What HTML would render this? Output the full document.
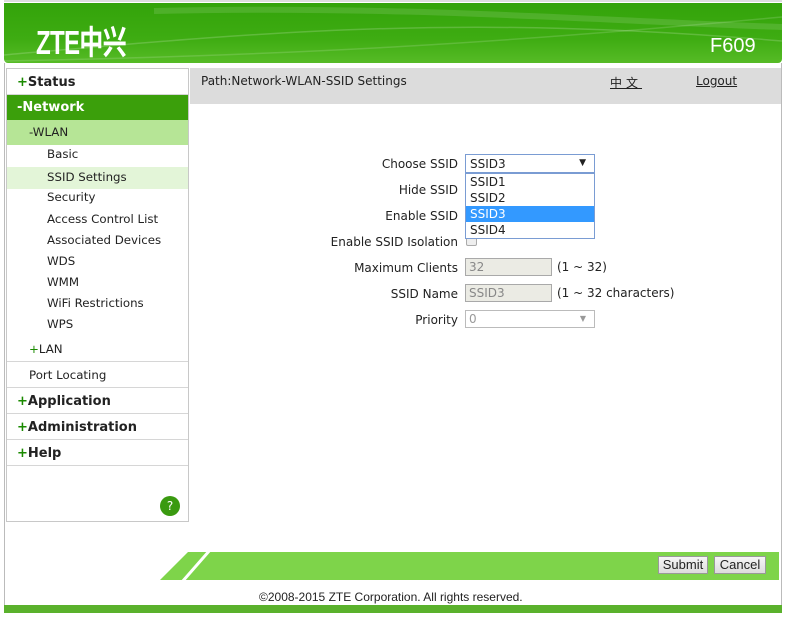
<!DOCTYPE html>
<html><head><meta charset="utf-8"><style>
*{margin:0;padding:0;box-sizing:border-box}
body{width:786px;height:618px;background:#fff;font-family:"DejaVu Sans","Liberation Sans",sans-serif;font-size:12px;color:#222;position:relative;overflow:hidden}
.abs{position:absolute}
#hdr{left:4px;top:3px;width:778px;height:60px;border-radius:0 0 4px 4px;background:linear-gradient(180deg,#33a30a 0%,#3eac12 60%,#56bb26 100%);overflow:hidden}
#menu{left:6px;top:68px;width:183px;height:454px;border:1px solid #c8c8c8;background:#fff;font-size:11.8px}
.r{position:absolute;left:0;width:181px;line-height:1}
.sep{border-bottom:1px solid #d6d6d6}
.lbl{position:absolute;text-align:right;width:140px;left:318px;font-size:12px}
.in{position:absolute;border:1px solid #a9a9a9;background:#ebebe4;height:18px;font-size:12px;color:#888;padding-left:3px;line-height:16px}
.btn{position:absolute;border:1px solid #999;background:linear-gradient(#f6f6f6,#dcdcdc);font-family:"Liberation Sans",sans-serif;font-size:13px;height:18px;line-height:16px;text-align:center}
</style></head><body>
<div class="abs" style="left:4px;top:0;width:778px;height:2px;background:#ddd"></div>
<div id="hdr" class="abs">
<svg width="778" height="60" style="position:absolute;left:0;top:0"><path d="M0 52 C250 30 450 10 778 38" stroke="rgba(255,255,255,.18)" stroke-width="1.5" fill="none"/><path d="M150 8 C400 2 600 18 778 24" stroke="rgba(255,255,255,.12)" stroke-width="6" fill="none"/><path d="M0 58 C300 52 500 40 778 14" stroke="rgba(255,255,255,.15)" stroke-width="1.5" fill="none"/></svg>
<div class="abs" style="left:32px;top:13px;color:#fff;font-family:'Liberation Sans','Noto Sans CJK SC',sans-serif;font-weight:bold;font-size:33px;letter-spacing:-1px;transform:scaleX(.73);transform-origin:left">ZTE中兴</div>
<div class="abs" style="left:706px;top:32px;color:#fff;font-family:'Liberation Sans',sans-serif;font-size:20px">F609</div>
</div>
<div class="abs" style="left:4px;top:63px;width:1px;height:543px;background:#bbb"></div>
<div class="abs" style="left:781px;top:63px;width:1px;height:543px;background:#bbb"></div>
<div id="menu" class="abs">
<div class="r sep" style="top:0;height:26px;font-weight:bold;font-size:13px;padding:7px 0 0 10px"><span style="color:#1a8a00">+</span>Status</div>
<div class="r" style="top:26px;height:25px;background:#3b9f0b;color:#fff;font-weight:bold;font-size:13px;padding:6px 0 0 10px">-Network</div>
<div class="r" style="top:51px;height:25px;background:#b6e596;padding:7px 0 0 22px">-WLAN</div>
<div class="r" style="top:76px;height:22px;padding:4px 0 0 40px">Basic</div>
<div class="r" style="top:98px;height:22px;background:#e3f5d8;padding:5px 0 0 40px">SSID Settings</div>
<div class="r" style="top:120px;height:21px;padding:3px 0 0 40px">Security</div>
<div class="r" style="top:141px;height:21px;padding:4px 0 0 40px">Access Control List</div>
<div class="r" style="top:162px;height:21px;padding:4px 0 0 40px">Associated Devices</div>
<div class="r" style="top:183px;height:21px;padding:4px 0 0 40px">WDS</div>
<div class="r" style="top:204px;height:21px;padding:4px 0 0 40px">WMM</div>
<div class="r" style="top:225px;height:21px;padding:4px 0 0 40px">WiFi Restrictions</div>
<div class="r" style="top:246px;height:21px;padding:4px 0 0 40px">WPS</div>
<div class="r sep" style="top:267px;height:26px;padding:8px 0 0 22px"><span style="color:#1a8a00">+</span>LAN</div>
<div class="r sep" style="top:293px;height:26px;padding:8px 0 0 22px">Port Locating</div>
<div class="r sep" style="top:319px;height:26px;font-weight:bold;font-size:13px;padding:7px 0 0 10px"><span style="color:#1a8a00">+</span>Application</div>
<div class="r sep" style="top:345px;height:26px;font-weight:bold;font-size:13px;padding:7px 0 0 10px"><span style="color:#1a8a00">+</span>Administration</div>
<div class="r sep" style="top:371px;height:26px;font-weight:bold;font-size:13px;padding:7px 0 0 10px"><span style="color:#1a8a00">+</span>Help</div>
<div class="abs" style="left:153px;top:427px;width:20px;height:20px;border-radius:50%;background:#3a9a10;color:#fff;text-align:center;line-height:20px;font-size:12px">?</div>
</div>
<div class="abs" style="left:190px;top:68px;width:591px;height:36px;background:#dcdcdc"></div>
<div class="abs" style="left:201px;top:74px">Path:Network-WLAN-SSID Settings</div>
<div class="abs" style="left:610px;top:74px;text-decoration:underline;font-family:'Noto Sans CJK SC',sans-serif;font-size:12px;letter-spacing:4px">中文</div>
<div class="abs" style="left:696px;top:74px;text-decoration:underline">Logout</div>

<div class="lbl" style="top:157px">Choose SSID</div>
<div class="lbl" style="top:183px">Hide SSID</div>
<div class="lbl" style="top:209px">Enable SSID</div>
<div class="lbl" style="top:235px">Enable SSID Isolation</div>
<div class="lbl" style="top:261px">Maximum Clients</div>
<div class="lbl" style="top:287px">SSID Name</div>
<div class="lbl" style="top:313px">Priority</div>
<div class="abs" style="left:466px;top:237px;width:11px;height:9px;border:1px solid #aaa;border-radius:2px;background:#eee"></div>
<div class="in" style="left:465px;top:258px;width:87px">32</div>
<div class="abs" style="left:557px;top:260px">(1 ~ 32)</div>
<div class="in" style="left:465px;top:284px;width:87px">SSID3</div>
<div class="abs" style="left:557px;top:286px">(1 ~ 32 characters)</div>
<div class="in" style="left:465px;top:310px;width:130px;background:#fff;border-color:#bbb;color:#999">0<span style="position:absolute;right:8px;font-size:8px">▼</span></div>
<div class="abs" style="left:465px;top:154px;width:130px;height:19px;border:1px solid #7a9cd3;background:#fff;padding:2px 0 0 4px">SSID3<span style="position:absolute;right:8px;top:3px;font-size:9px">▼</span></div>
<div class="abs" style="left:465px;top:173px;width:130px;height:66px;border:1px solid #7a9cd3;background:#fff">
<div style="height:16px;padding:1px 0 0 4px">SSID1</div>
<div style="height:16px;padding:1px 0 0 4px">SSID2</div>
<div style="height:16px;padding:1px 0 0 4px;background:#3399ff;color:#fff">SSID3</div>
<div style="height:16px;padding:1px 0 0 4px">SSID4</div>
</div>

<svg class="abs" style="left:160px;top:552px" width="619" height="28"><polygon points="28,0 619,0 619,28 0,28" fill="#7ed44a"/><line x1="22" y1="30" x2="50" y2="-2" stroke="#fff" stroke-width="3"/></svg>
<div class="btn" style="left:658px;top:556px;width:50px">Submit</div>
<div class="btn" style="left:714px;top:556px;width:52px">Cancel</div>
<div class="abs" style="left:259px;top:590px;font-family:'Liberation Sans',sans-serif;font-size:12px">©2008-2015 ZTE Corporation. All rights reserved.</div>
<div class="abs" style="left:4px;top:605px;width:778px;height:8px;background:#5ab12c"></div>
</body></html>
